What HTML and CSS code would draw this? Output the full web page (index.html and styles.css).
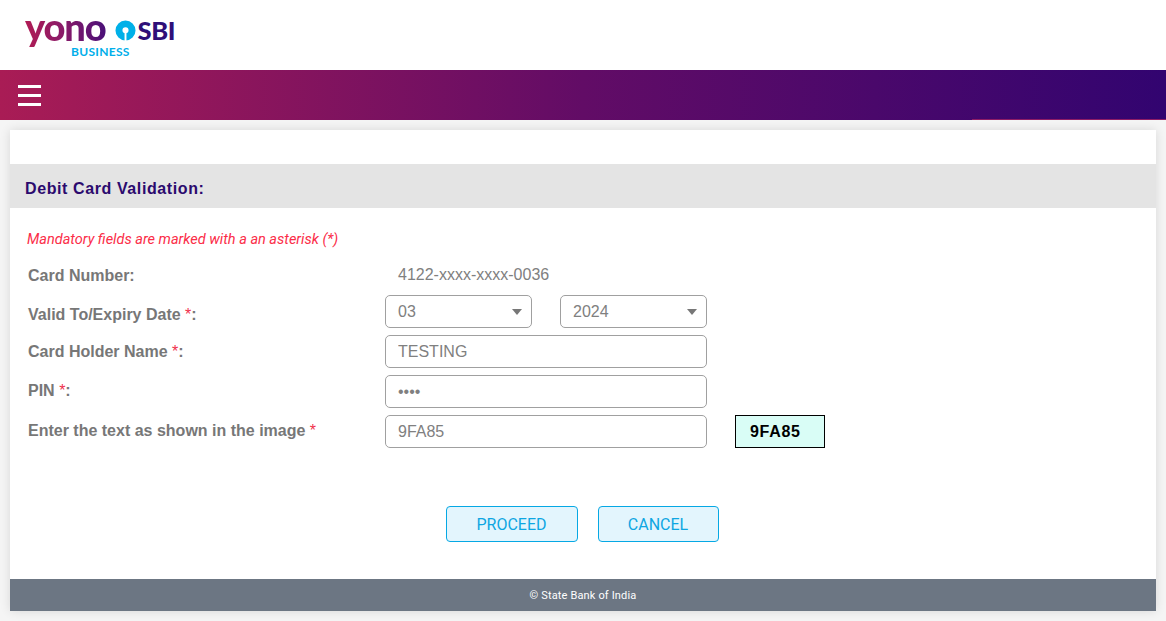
FILE: index.html
```html
<!DOCTYPE html>
<html lang="en">
<head>
    <meta charset="UTF-8">
    <title>yono SBI Business</title>
    <link rel="stylesheet" href="styles.css">
</head>
<body>
    <!-- logo strip -->
    <header class="brand-bar">
        <div class="logo">
            <div class="logo-top">
                <span class="logo-yono">yono</span>
                <svg class="logo-mark" viewBox="0 0 22 22" width="21" height="21" aria-hidden="true">
                    <path fill-rule="evenodd" fill="#00b0e8" d="M11 0.5a10.5 10.5 0 1 0 0 21a10.5 10.5 0 1 0 0-21zM11 7.6a3.2 3.2 0 1 1 0 6.4a3.2 3.2 0 1 1 0-6.4z"/>
                    <rect x="10" y="12" width="2" height="10" fill="#fff"/>
                </svg>
                <span class="logo-sbi">SBI</span>
            </div>
            <div class="logo-sub">BUSINESS</div>
        </div>
    </header>

    <nav class="nav-bar">
        <button class="menu-button" aria-label="Menu">
            <span></span><span></span><span></span>
        </button>
    </nav>

    <main class="card">
        <h1 class="card-title">Debit Card Validation:</h1>

        <form class="card-form">
            <p class="mandatory">Mandatory fields are marked with a an asterisk (*)</p>

            <div class="fields">
                <div class="field-label label-card">Card Number:</div>
                <div class="field-static">4122-xxxx-xxxx-0036</div>

                <div class="field-label label-expiry">Valid To/Expiry Date <span class="req">*</span>:</div>
                <div class="expiry-group">
                    <div class="select-box"><span>03</span><i class="caret"></i></div>
                    <div class="select-box"><span>2024</span><i class="caret"></i></div>
                </div>

                <div class="field-label label-name">Card Holder Name <span class="req">*</span>:</div>
                <input class="text-input" type="text" value="TESTING">

                <div class="field-label label-pin">PIN <span class="req">*</span>:</div>
                <input class="text-input" type="password" value="1234">

                <div class="field-label label-captcha">Enter the text as shown in the image <span class="req">*</span></div>
                <div class="captcha-group">
                    <input class="text-input" type="text" value="9FA85">
                    <div class="captcha">9FA85</div>
                </div>
            </div>

            <div class="actions">
                <button type="button" class="action-button proceed">PROCEED</button>
                <button type="button" class="action-button cancel">CANCEL</button>
            </div>
        </form>

        <footer class="card-footer">© State Bank of India</footer>
    </main>
</body>
</html>
```

FILE: styles.css
```css
* { box-sizing: border-box; margin: 0; padding: 0; }

html, body {
    height: 100%;
    overflow: hidden;
}

body {
    background-color: #f5f5f5;
    font-family: "Liberation Sans", Arial, sans-serif;
    color: #777;
}

/* --- Header --- */
.brand-bar {
    height: 70px;
    background-color: #fff;
    padding: 11px 0 0 25px;
}
.logo { width: 150px; }
.logo-top {
    display: flex;
    align-items: center;
    height: 36px;
}
.logo-yono {
    font-family: Lato, sans-serif;
    font-weight: 900;
    font-size: 38px;
    line-height: 36px;
    letter-spacing: -1.1px;
    padding-bottom: 6px;
    background: linear-gradient(90deg, #b01c54 0%, #8b1a68 45%, #4a1078 100%);
    -webkit-background-clip: text;
    background-clip: text;
    color: transparent;
}
.logo-mark { margin: 2px 2px 0 9px; flex: none; }
.logo-sbi {
    font-family: Lato, sans-serif;
    font-weight: 900;
    font-size: 25.5px;
    line-height: 36px;
    letter-spacing: -0.4px;
    color: #2f0f78;
    margin-top: 1px;
}
.logo-sub {
    font-family: Lato, sans-serif;
    font-weight: 700;
    font-size: 12px;
    line-height: 12px;
    letter-spacing: 0.3px;
    color: #00aeea;
    margin: -1px 0 0 46px;
}

.nav-bar {
    position: relative;
    height: 50px;
    background: linear-gradient(90deg, #a91c55 0%, #620c66 50%, #320470 100%);
    display: flex;
    align-items: center;
    padding-left: 18px;
}
/* thin line along the bottom right of the bar */
.nav-bar::after {
    content: "";
    position: absolute;
    right: 0;
    bottom: 0;
    width: 194px;
    height: 1px;
    background-color: #8e1c66;
}
.menu-button {
    display: flex;
    flex-direction: column;
    gap: 6px;
    width: 23px;
    background: none;
    border: none;
}
.menu-button span {
    display: block;
    height: 3px;
    background-color: #fff;
}

/* --- Card --- */
.card {
    display: flex;
    flex-direction: column;
    width: 1146px;
    height: 481px;
    margin: 10px 10px 0;
    background-color: #fff;
    box-shadow: 0 0 10px rgba(0, 0, 0, 0.12);
}
.card-title {
    margin-top: 34px;
    height: 44px;
    line-height: 49px;
    padding-left: 15px;
    background-color: #e4e4e4;
    color: #2b0a6e;
    font-size: 16px;
    font-weight: bold;
    letter-spacing: 0.6px;
}
.card-form {
    flex: 1;
    display: flex;
    flex-direction: column;
    padding: 22px 0 0 17px;
}
.mandatory {
    font-family: Roboto, sans-serif;
    font-style: italic;
    font-size: 14.5px;
    line-height: 20px;
    color: #fb2d48;
}

.fields {
    display: grid;
    grid-template-columns: 357px 1fr;
    row-gap: 7px;
    margin-top: 13px;
    padding-left: 1px;
    font-size: 16px;
}
.field-label {
    font-weight: bold;
    line-height: 18px;
    color: #777;
    align-self: center;
}
.label-card { padding-top: 0; }
.label-expiry { padding-top: 7px; }
.label-pin { padding-bottom: 2px; }
.label-captcha { padding-bottom: 2px; }
.req {
    color: #f0314b;
    font-weight: normal;
}
.field-static {
    padding-left: 13px;
    height: 25px;
    line-height: 24px;
    color: #808080;
}

.expiry-group {
    display: flex;
    gap: 28px;
}
.select-box {
    display: flex;
    align-items: center;
    justify-content: space-between;
    width: 147px;
    height: 33px;
    padding: 1px 9px 0 12px;
    border: 1px solid #a0a0a0;
    border-radius: 5px;
    color: #808080;
}
.caret {
    width: 0;
    height: 0;
    margin-bottom: 1px;
    border-left: 5px solid transparent;
    border-right: 5px solid transparent;
    border-top: 6px solid #777;
}
.text-input {
    width: 322px;
    height: 33px;
    padding: 1px 12px 0;
    border: 1px solid #a0a0a0;
    border-radius: 5px;
    background-color: #fff;
    color: #808080;
    font-family: "Liberation Sans", Arial, sans-serif;
    font-size: 16px;
    outline: none;
}
.captcha-group {
    display: flex;
    gap: 28px;
}
.captcha {
    width: 90px;
    height: 33px;
    padding-left: 14px;
    line-height: 32px;
    border: 1px solid #000;
    background-color: #d9fdf6;
    color: #000;
    font-weight: bold;
    font-size: 16px;
    letter-spacing: 0.7px;
}

.actions {
    display: flex;
    justify-content: center;
    gap: 20px;
    margin-top: 58px;
    padding-right: 19px;
}
.action-button {
    height: 36px;
    border: 1px solid #06a8e4;
    border-radius: 4px;
    background-color: #e3f5fd;
    color: #0ea6e2;
    font-family: Roboto, sans-serif;
    font-size: 16px;
}
.proceed { width: 132px; }
.cancel { width: 121px; }

.card-footer {
    height: 32px;
    line-height: 33px;
    text-align: center;
    background-color: #6c7683;
    color: #fff;
    font-family: Roboto, sans-serif;
    font-size: 11px;
    letter-spacing: 0.15px;
}
```
